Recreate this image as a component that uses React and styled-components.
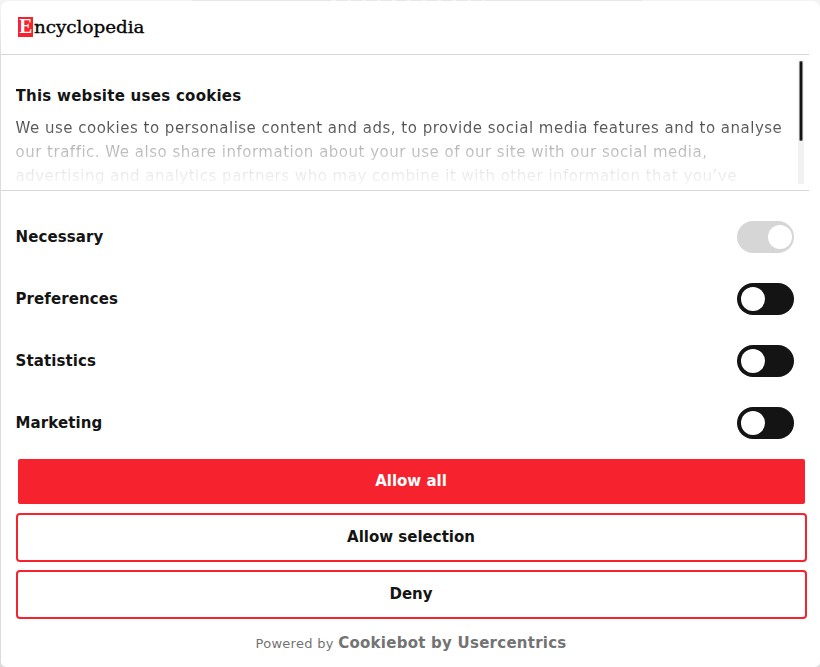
import React from 'react';
import styled, { createGlobalStyle } from 'styled-components';

const GlobalStyle = createGlobalStyle`
  * { box-sizing: border-box; }
  body {
    margin: 0;
    overflow: hidden;
    background: #dcdcdc;
    color: #141414;
    font-family: 'DejaVu Sans', Verdana, sans-serif;
    font-size: 15px;
  }
`;

const Page = styled.div`
  height: 667px;
  padding-left: 1px;
  display: flex;
  flex-direction: column;
  background: linear-gradient(#f3f3f3 0 12px, #dcdcdc 60px);
`;

const Backdrop = styled.div`
  height: 1px;
  flex: none;
  margin: 0 178px 0 191px;
  background: linear-gradient(90deg, #e6e6e6 139px, transparent 139px 292px, #e6e6e6 292px);
  display: flex;
  justify-content: center;
`;

const BackdropTitle = styled.div`
  width: 153px;
  margin-right: 18px;
  background: repeating-linear-gradient(90deg, #f3f3f3 0 4px, #e6e6e6 4px 15px);
`;

const Dialog = styled.main`
  flex: 1;
  min-height: 0;
  border-radius: 8px 8px 5px 5px;
  background: #fff;
  display: flex;
  flex-direction: column;
  padding-right: 11px;
`;

const Header = styled.header`
  height: 54px;
  flex: none;
  border-bottom: 1px solid #d6d6d6;
  padding: 12px 0 0 17px;
`;

const Logo = styled.svg`
  display: block;
  width: 130px;
  height: 32px;
`;

const Intro = styled.section`
  height: 136px;
  flex: none;
  border-bottom: 1px solid #d6d6d6;
  padding: 5px 5px 6px 14.5px;
  display: flex;
  justify-content: space-between;
`;

const IntroCopy = styled.div`
  height: 125px;
  overflow: hidden;
  letter-spacing: 0.5px;
  line-height: 24px;
  white-space: nowrap;
`;

const Title = styled.h1`
  margin: 24px 0 8px;
  font-size: 15px;
  line-height: 24px;
  letter-spacing: 0.27px;
`;

const Line = styled.div`
  background: linear-gradient(${p => p.$from}, ${p => p.$to});
  background-clip: text;
  color: transparent;
`;

const ScrollTrack = styled.div`
  width: 6px;
  height: 124px;
  background: #f1f1f1;
  padding: 1px;
`;

const ScrollThumb = styled.div`
  height: 79.5px;
  width: 4px;
  border: 1px solid #8a8a8a;
  border-width: 0 1px;
  border-radius: 2px;
  background: #141414;
`;

const Options = styled.section`
  padding: 15px 15px 0 14.5px;
  flex: none;
`;

const Option = styled.label`
  height: 62px;
  display: flex;
  align-items: center;
  justify-content: space-between;
  font-weight: 700;
  letter-spacing: 0.1px;
`;

const Switch = styled.span`
  width: 57px;
  height: 32px;
  padding: 4px ${p => (p.$on ? 2 : 4)}px;
  border-radius: 16px;
  background: ${p => (p.$on ? '#d6d6d6' : '#141414')};
  display: flex;
  justify-content: ${p => (p.$on ? 'flex-end' : 'flex-start')};
`;

const Knob = styled.span`
  width: 24px;
  height: 24px;
  border-radius: 50%;
  background: #fff;
`;

const Actions = styled.div`
  display: flex;
  flex-direction: column;
  gap: 8px;
  padding: 5px 2px 0 15px;
`;

const Button = styled.button`
  height: 49px;
  padding: 0 1px 2px 0;
  border: 2px solid #f6222e;
  border-radius: 4px;
  background: #fff;
  color: #141414;
  font: 700 15px 'DejaVu Sans', Verdana, sans-serif;
`;

const PrimaryButton = styled(Button)`
  height: 45px;
  margin: 0 2px 1px;
  border: 0;
  border-radius: 2px;
  background: #f6222e;
  color: #fff;
`;

const Footer = styled.footer`
  padding-top: 13px;
  padding-left: 12px;
  text-align: center;
  font-size: 13px;
  line-height: 22px;
  letter-spacing: 0.3px;
  color: #737373;
`;

const Vendor = styled.strong`
  font-size: 15px;
  letter-spacing: 0.25px;
`;

const categories = [
  { name: 'Necessary', on: true },
  { name: 'Preferences', on: false },
  { name: 'Statistics', on: false },
  { name: 'Marketing', on: false },
];

export default function App() {
  return (
    <>
      <GlobalStyle />
      <Page>
        <Backdrop><BackdropTitle /></Backdrop>
        <Dialog>
          <Header>
            <Logo viewBox="0 -4 130 32" role="img" aria-label="Encyclopedia">
              <rect x="0" y="0" width="15" height="20" fill="#f6222e" />
              <text x="1.2" y="16" fill="#fff" fontFamily="Liberation Serif, serif" fontWeight="700" fontSize="20" textLength="13" lengthAdjust="spacingAndGlyphs">E</text>
              <text x="16" y="16" fill="#050505" stroke="#050505" strokeWidth="0.35" fontFamily="DejaVu Serif, serif" fontSize="17" textLength="110.5" lengthAdjust="spacingAndGlyphs">ncyclopedia</text>
            </Logo>
          </Header>
          <Intro>
            <IntroCopy>
              <Title>This website uses cookies</Title>
              <Line $from="#3c3c3c" $to="#777">We use cookies to personalise content and ads, to provide social media features and to analyse</Line>
              <Line $from="#a8a8a8" $to="#d2d2d2">our traffic. We also share information about your use of our site with our social media,</Line>
              <Line $from="#dedede" $to="#fafafa">advertising and analytics partners who may combine it with other information that you’ve</Line>
            </IntroCopy>
            <ScrollTrack><ScrollThumb /></ScrollTrack>
          </Intro>
          <Options>
            {categories.map(c => (
              <Option key={c.name}>
                {c.name}
                <Switch $on={c.on}><Knob /></Switch>
              </Option>
            ))}
          </Options>
          <Actions>
            <PrimaryButton>Allow all</PrimaryButton>
            <Button>Allow selection</Button>
            <Button>Deny</Button>
          </Actions>
          <Footer>Powered by <Vendor>Cookiebot by Usercentrics</Vendor></Footer>
        </Dialog>
      </Page>
    </>
  );
}
